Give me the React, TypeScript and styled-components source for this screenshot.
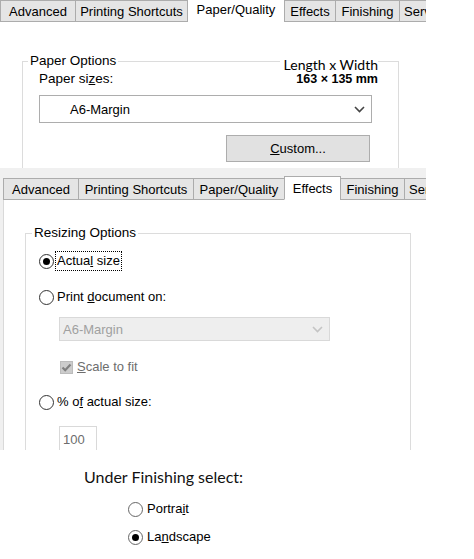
import React from "react";
import styled, { createGlobalStyle } from "styled-components";

const GlobalStyle = createGlobalStyle`
  html, body {
    margin: 0;
    padding: 0;
    background: #fff;
  }
  body {
    font-family: "Liberation Sans", Arial, sans-serif;
    font-size: 13px;
    color: #000;
  }
`;

const Page = styled.div`
  width: 474px;
  height: 559px;
  overflow: hidden;
  display: flex;
  flex-direction: column;
`;

// one cropped dialog screenshot
const Shot = styled.div<{ $h: number; $bg: string }>`
  width: 426px;
  height: ${(p) => p.$h}px;
  flex: none;
  overflow: hidden;
  display: flex;
  flex-direction: column;
  background: ${(p) => p.$bg};
`;

const TabStrip = styled.div<{ $pad: string }>`
  display: flex;
  align-items: flex-end;
  flex: none;
  padding: ${(p) => p.$pad};
`;

const Tab = styled.div<{ $w: number; $sel?: boolean; $flat?: boolean }>`
  box-sizing: border-box;
  flex: none;
  width: ${(p) => p.$w}px;
  height: ${(p) => (p.$sel && !p.$flat ? 24 : p.$flat ? 21 : 22)}px;
  display: flex;
  align-items: center;
  justify-content: center;
  white-space: nowrap;
  overflow: hidden;
  border: 1px solid ${(p) => (p.$sel && p.$flat ? "transparent" : "#acacac")};
  border-bottom-color: ${(p) => (p.$sel ? (p.$flat ? "transparent" : "#fff") : "#acacac")};
  background: ${(p) => (p.$sel ? (p.$flat ? "transparent" : "#fff") : "#e5e5e5")};
  padding-bottom: ${(p) => (p.$sel && p.$flat ? 4 : 0)}px;
  & + & {
    margin-left: -1px;
  }
`;

const ShotBody = styled.div`
  flex: 1;
  display: flex;
  flex-direction: column;
  min-height: 0;
`;

const Panel = styled.div`
  flex: 1;
  display: flex;
  flex-direction: column;
  margin-left: 3px;
  background: #fff;
  border-left: 1px solid #d9d9d9;
  min-height: 0;
`;

const Group = styled.fieldset<{ $mt: number; $ml: number; $w: number }>`
  box-sizing: border-box;
  flex: 1;
  min-width: 0;
  width: ${(p) => p.$w}px;
  margin: ${(p) => p.$mt}px 0 0 ${(p) => p.$ml}px;
  padding: 0;
  border: 1px solid #dcdcdc;
  border-bottom: none;
`;

const Legend = styled.legend<{ $ml: number }>`
  margin-left: ${(p) => p.$ml}px;
  padding: 0 2px;
  font-size: 13.5px;
  line-height: 16px;
`;

const SizeHeader = styled.div`
  display: flex;
  justify-content: space-between;
  align-items: flex-end;
  margin-top: -12px;
  padding: 0 20px 0 16px;
`;

const Label = styled.span`
  font-size: 13.5px;
  line-height: 15px;
`;

const Dims = styled.div`
  background: #fff;
  padding-left: 4px;
  text-align: right;
`;

const DimTitle = styled.div`
  font-family: Lato, "Open Sans", sans-serif;
  font-size: 14px;
  line-height: 16px;
`;

const DimValue = styled.div`
  font-weight: bold;
  font-size: 12.5px;
  line-height: 13px;
`;

const Select = styled.div<{ $off?: boolean; $w: number; $h: number; $mt: number; $ml: number; $pl: number }>`
  box-sizing: border-box;
  display: flex;
  align-items: center;
  width: ${(p) => p.$w}px;
  height: ${(p) => p.$h}px;
  margin: ${(p) => p.$mt}px 0 0 ${(p) => p.$ml}px;
  padding: 0 6px 0 ${(p) => p.$pl}px;
  border: 1px solid ${(p) => (p.$off ? "#d9d9d9" : "#adadad")};
  background: ${(p) => (p.$off ? "#eeeeee" : "#fff")};
  color: ${(p) => (p.$off ? "#a0a0a0" : "#000")};
  & > svg {
    margin-left: auto;
  }
`;

const Button = styled.div`
  box-sizing: border-box;
  display: flex;
  align-items: center;
  justify-content: center;
  width: 144px;
  height: 27px;
  margin: 12px 0 0 203px;
  border: 1px solid #adadad;
  background: #e1e1e1;
`;

const Row = styled.div<{ $mt: number; $ml: number }>`
  display: flex;
  align-items: center;
  height: 20px;
  margin: ${(p) => p.$mt}px 0 0 ${(p) => p.$ml}px;
`;

const Radio = styled.span<{ $on?: boolean; $ring: string }>`
  box-sizing: border-box;
  flex: none;
  width: 15px;
  height: 15px;
  border-radius: 50%;
  border: 1px solid ${(p) => p.$ring};
  background: #fff;
  display: flex;
  align-items: center;
  justify-content: center;
  &::after {
    content: "";
    width: 7px;
    height: 7px;
    border-radius: 50%;
    background: #000;
    display: ${(p) => (p.$on ? "block" : "none")};
  }
`;

const OptText = styled.span<{ $focus?: boolean; $off?: boolean; $gap: number }>`
  margin-left: ${(p) => p.$gap}px;
  padding: 1px 1px 2px;
  line-height: 15px;
  color: ${(p) => (p.$off ? "#6d6d6d" : "#000")};
  outline: ${(p) => (p.$focus ? "1px dotted #000" : "none")};
`;

const Check = styled.span`
  box-sizing: border-box;
  flex: none;
  width: 13px;
  height: 13px;
  border: 1px solid #bcbcbc;
  background: #cccccc;
  display: flex;
  align-items: center;
  justify-content: center;
`;

const NumBox = styled.div`
  box-sizing: border-box;
  width: 38px;
  height: 26px;
  margin: 14px 0 0 33px;
  padding: 5px 0 0 3px;
  border: 1px solid #d9d9d9;
  color: #6d6d6d;
  flex: none;
`;

const Note = styled.div`
  margin: 17px 0 0 84px;
  font-family: Lato, "Open Sans", sans-serif;
  font-size: 16px;
  line-height: 20px;
  color: #111;
`;

const Chevron = ({ color }: { color: string }) => (
  <svg width="11" height="7" viewBox="0 0 11 7">
    <polyline points="1,1 5.5,5.5 10,1" fill="none" stroke={color} strokeWidth="1.6" />
  </svg>
);

const CheckMark = () => (
  <svg width="11" height="11" viewBox="0 0 11 11">
    <path d="M1.5 5.5 L4.2 8.2 L9.5 2.5" fill="none" stroke="#808080" strokeWidth="2.2" />
  </svg>
);

export default function App() {
  return (
    <Page>
      <GlobalStyle />

      <Shot $h={168} $bg="#fff">
        <TabStrip $pad="0">
          <Tab $w={76}>Advanced</Tab>
          <Tab $w={113}>Printing Shortcuts</Tab>
          <Tab $w={98} $sel $flat>Paper/Quality</Tab>
          <Tab $w={52}>Effects</Tab>
          <Tab $w={65}>Finishing</Tab>
          <Tab $w={60}>Services</Tab>
        </TabStrip>
        <ShotBody>
          <Group $mt={31} $ml={22} $w={377}>
            <Legend $ml={5}>Paper Options</Legend>
            <SizeHeader>
              <Label>
                Paper si<u>z</u>es:
              </Label>
              <Dims>
                <DimTitle>Length x Width</DimTitle>
                <DimValue>163 × 135 mm</DimValue>
              </Dims>
            </SizeHeader>
            <Select $w={333} $h={28} $mt={9} $ml={16} $pl={30}>
              A6-Margin
              <Chevron color="#444" />
            </Select>
            <Button>
              <span>
                <u>C</u>ustom...
              </span>
            </Button>
          </Group>
        </ShotBody>
      </Shot>

      <Shot $h={282} $bg="#f0f0f0">
        <TabStrip $pad="8px 0 0 3px">
          <Tab $w={76}>Advanced</Tab>
          <Tab $w={116}>Printing Shortcuts</Tab>
          <Tab $w={92}>Paper/Quality</Tab>
          <Tab $w={57} $sel>Effects</Tab>
          <Tab $w={65}>Finishing</Tab>
          <Tab $w={60}>Services</Tab>
        </TabStrip>
        <Panel>
          <Group $mt={25} $ml={21} $w={386}>
            <Legend $ml={6}>Resizing Options</Legend>
            <Row $mt={10} $ml={13}>
              <Radio $on $ring="#333" />
              <OptText $gap={2} $focus>
                Actua<u>l</u> size
              </OptText>
            </Row>
            <Row $mt={16} $ml={13}>
              <Radio $ring="#333" />
              <OptText $gap={2}>
                Print <u>d</u>ocument on:
              </OptText>
            </Row>
            <Select $off $w={271} $h={24} $mt={10} $ml={33} $pl={3}>
              A6-Margin
              <Chevron color="#c4c4c4" />
            </Select>
            <Row $mt={16} $ml={34}>
              <Check>
                <CheckMark />
              </Check>
              <OptText $gap={3} $off>
                <u>S</u>cale to fit
              </OptText>
            </Row>
            <Row $mt={15} $ml={13}>
              <Radio $ring="#333" />
              <OptText $gap={2}>
                % o<u>f</u> actual size:
              </OptText>
            </Row>
            <NumBox>100</NumBox>
          </Group>
        </Panel>
      </Shot>

      <Note>Under Finishing select:</Note>
      <Row $mt={12} $ml={128}>
        <Radio $ring="#666" />
        <OptText $gap={3}>
          Portra<u>i</u>t
        </OptText>
      </Row>
      <Row $mt={8} $ml={128}>
        <Radio $on $ring="#666" />
        <OptText $gap={3}>
          La<u>n</u>dscape
        </OptText>
      </Row>
    </Page>
  );
}
